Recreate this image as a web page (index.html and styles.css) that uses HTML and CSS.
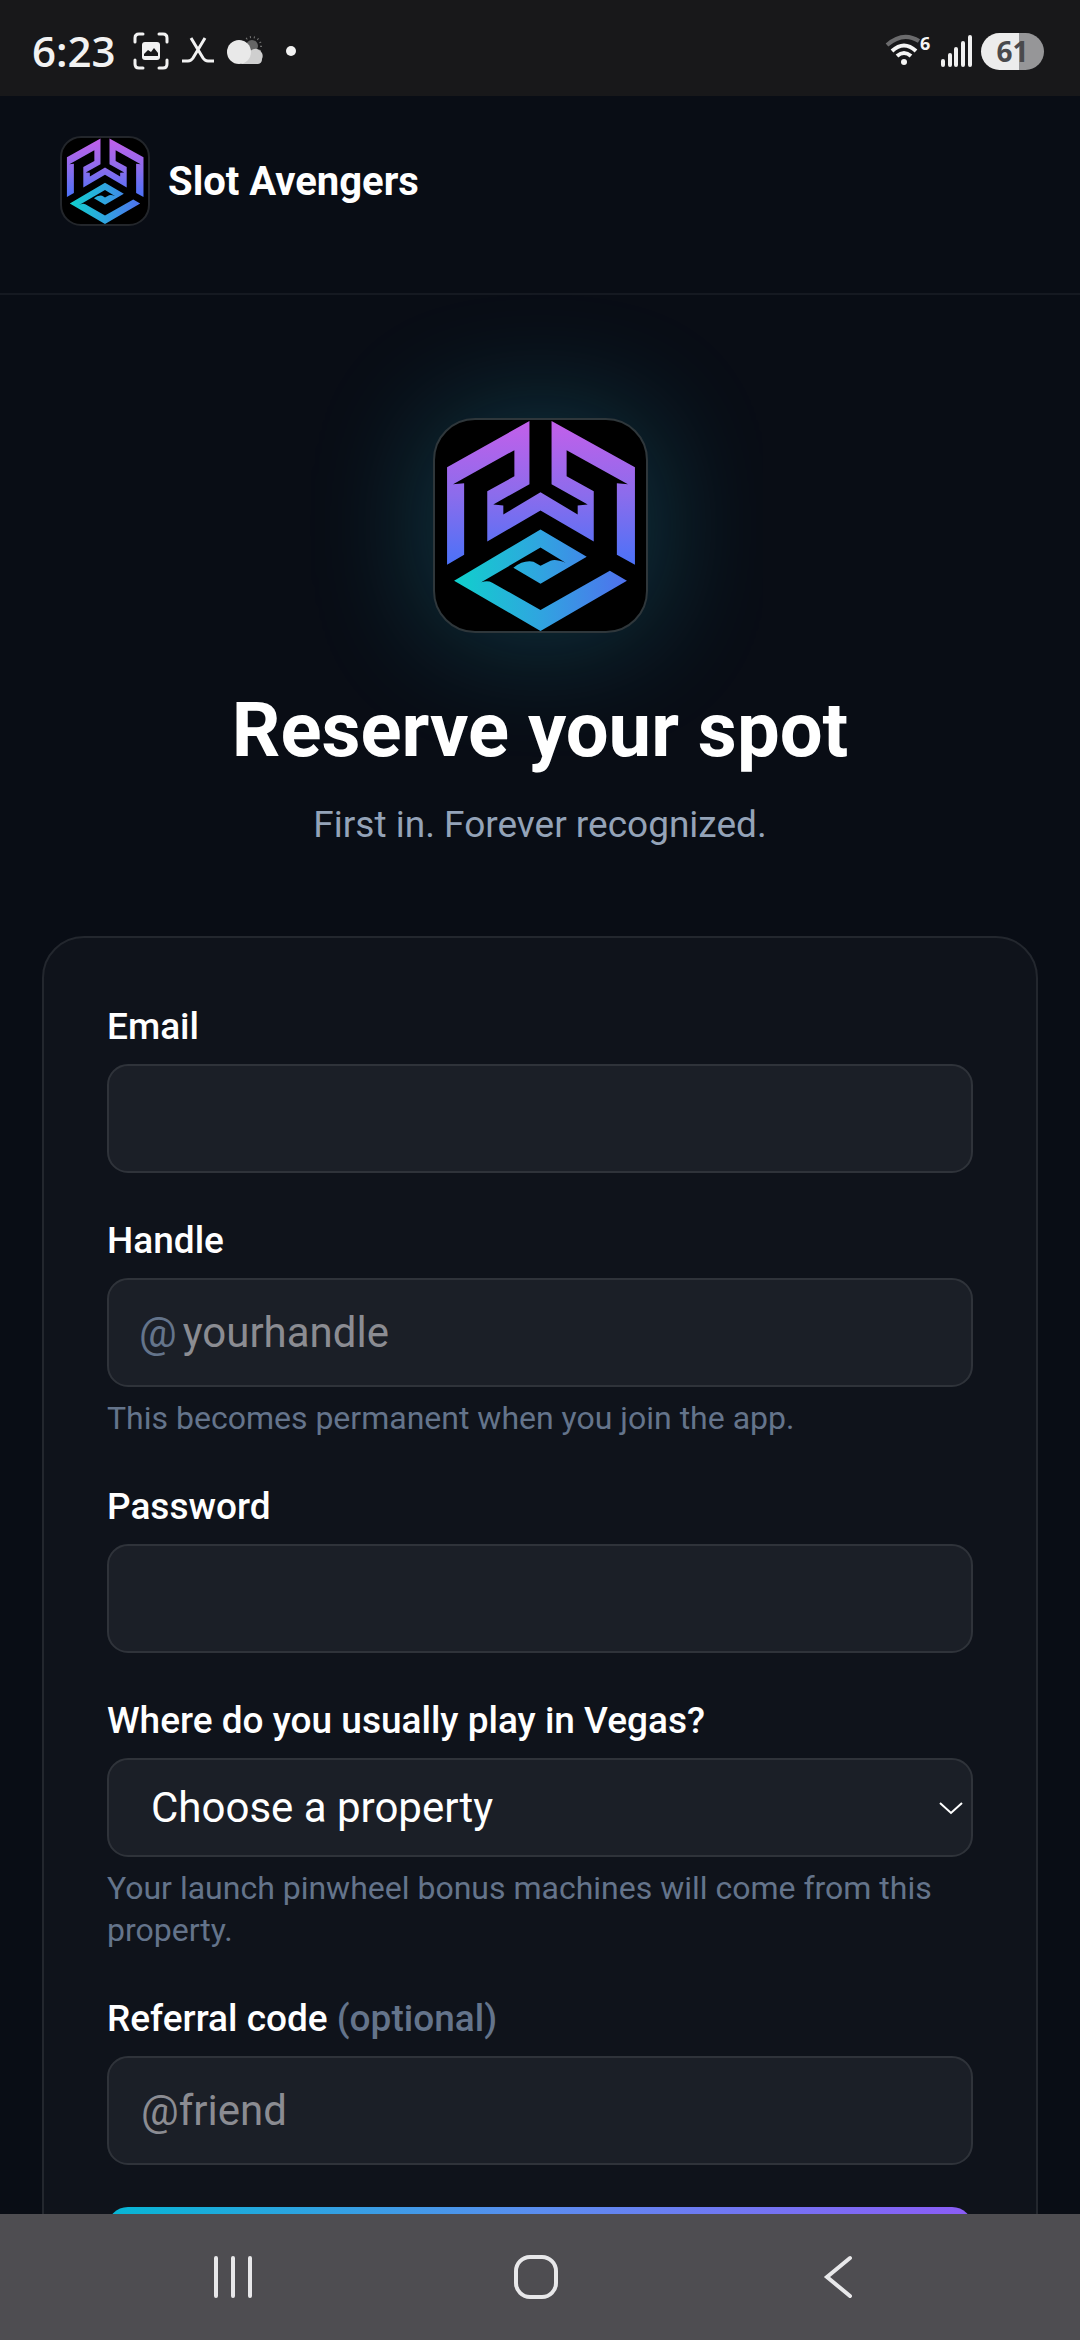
FILE: index.html
```html
<!DOCTYPE html>
<html lang="en">
<head>
    <meta charset="UTF-8">
    <meta name="viewport" content="width=device-width, initial-scale=1.0">
    <title>Slot Avengers</title>
    <link rel="stylesheet" href="styles.css">
</head>
<body>

    <!-- shared logo -->
    <svg class="defs" width="0" height="0" aria-hidden="true">
        <defs>
            <linearGradient id="purple" gradientUnits="userSpaceOnUse" x1="0" y1="5" x2="0" y2="145">
                <stop offset="0" stop-color="#c060ea"/>
                <stop offset="0.5" stop-color="#8b6cec"/>
                <stop offset="1" stop-color="#4a72f8"/>
            </linearGradient>
            <linearGradient id="teal" gradientUnits="userSpaceOnUse" x1="20" y1="0" x2="192" y2="0">
                <stop offset="0" stop-color="#10d0cc"/>
                <stop offset="0.5" stop-color="#30a4e0"/>
                <stop offset="1" stop-color="#5070ee"/>
            </linearGradient>
            <symbol id="logo" viewBox="0 0 210 210">
                <path fill="url(#purple)" d="M94 1V64L58 84L68 85V94L105 72L142 94V85L152 84L116 64V1L199 47V144L181 134V63L192 64L131 30V56L158 71V121L105 90L52 121V71L79 56V30L18 64L29 63V134L12 144V47Z"/>
                <path fill="url(#teal)" d="M19 160L105 109L151 136L105 163L78 147Q88 139 98 141L105 145L115 140Q120 138 130 142L105 127L40 165Q50 158 57 162L105 189L174 150L191 160L105 210Z"/>
            </symbol>
        </defs>
    </svg>

    <div class="status-bar">
        <div class="status-left">
            <span class="clock">6:23</span>
            <svg width="36" height="38" viewBox="0 0 36 38" fill="none" stroke="#f2f2f2" stroke-width="3" stroke-linecap="round">
                <path d="M2 10V6Q2 2 6 2H10M26 2H30Q34 2 34 6V10M34 28V32Q34 36 30 36H26M10 36H6Q2 36 2 32V28"/>
                <rect x="9" y="10" width="18" height="18" rx="3" fill="#f2f2f2" stroke="none"/>
                <path d="M11 24V22L15 18L18 20L21 16L25 21V24Z" fill="#18181a" stroke="none"/>
            </svg>
            <svg width="34" height="28" viewBox="0 0 34 28" fill="none" stroke="#f2f2f2" stroke-width="3">
                <path d="M10 1L22 21Q24 24 27 24H33M24 1L12 21Q10 24 7 24H1"/>
            </svg>
            <svg width="36" height="30" viewBox="0 0 36 30">
                <circle cx="25" cy="10" r="9" stroke="#777" stroke-width="2" stroke-dasharray="1 3" fill="none"/>
                <circle cx="25" cy="10" r="6" fill="#666"/>
                <path d="M14 28L22 17a7 7 0 0 1 13 6a5 5 0 0 1-4 5Z" fill="#cfcfcf"/>
                <circle cx="12" cy="16" r="12" fill="#e9e9e9"/>
            </svg>
            <span class="dot"></span>
        </div>
        <div class="status-right">
            <svg width="48" height="36" viewBox="0 0 48 36" fill="none" stroke="#f5f5f5" stroke-width="4">
                <path d="M2 12Q18 -2 34 8" stroke="#6b6b6d"/>
                <path d="M7 18Q19 7 31 18"/>
                <path d="M12 23Q19 17 26 23"/>
                <circle cx="19" cy="29" r="3" fill="#f5f5f5" stroke="none"/>
                <text class="wifi-gen" x="35" y="17">6</text>
            </svg>
            <svg width="32" height="34" viewBox="0 0 32 34" stroke="#f0f0f0" stroke-width="4" stroke-linecap="round">
                <path d="M2 27V31M9 21V31M15 15V31M22 9V31M29 3V31"/>
            </svg>
            <span class="battery">61</span>
        </div>
    </div>

    <main class="page">
        <header class="site-header">
            <svg class="brand-logo"><use href="#logo"/></svg>
            <span class="brand-name">Slot Avengers</span>
        </header>

        <section class="hero">
            <svg class="hero-logo"><use href="#logo"/></svg>
            <h1>Reserve your spot</h1>
            <p>First in. Forever recognized.</p>
        </section>

        <form class="card">
            <div class="field">
                <label for="email">Email</label>
                <input type="email" id="email">
            </div>
            <div class="field">
                <label for="handle">Handle</label>
                <div class="handle-box">
                    <span class="at">@</span>
                    <input type="text" id="handle" placeholder="yourhandle">
                </div>
                <p class="hint">This becomes permanent when you join the app.</p>
            </div>
            <div class="field">
                <label for="password">Password</label>
                <input type="password" id="password">
            </div>
            <div class="field">
                <label for="property">Where do you usually play in Vegas?</label>
                <div class="select-box">
                    <select id="property">
                        <option>Choose a property</option>
                    </select>
                    <svg class="chevron" width="24" height="14" viewBox="0 0 24 14" fill="none" stroke="#fff" stroke-width="2"><path d="M1 2L12 12L23 2"/></svg>
                </div>
                <p class="hint">Your launch pinwheel bonus machines will come from this property.</p>
            </div>
            <div class="field">
                <label for="referral">Referral code <span class="optional">(optional)</span></label>
                <input type="text" id="referral" placeholder="@friend">
            </div>
            <button type="submit" class="submit" aria-label="Reserve"></button>
        </form>
    </main>

    <nav class="nav-bar">
        <button aria-label="Recent apps">
            <svg width="44" height="44" viewBox="0 0 44 44" stroke="#e8e8ea" stroke-width="4" stroke-linecap="round"><path d="M5 3V41M22 3V41M39 3V41"/></svg>
        </button>
        <button aria-label="Home">
            <svg width="44" height="44" viewBox="0 0 44 44" fill="none" stroke="#e8e8ea" stroke-width="4"><rect x="2" y="2" width="40" height="40" rx="14"/></svg>
        </button>
        <button aria-label="Back">
            <svg width="44" height="44" viewBox="0 0 44 44" fill="none" stroke="#e8e8ea" stroke-width="4" stroke-linecap="round"><path d="M33 3L10 22L33 41"/></svg>
        </button>
    </nav>

</body>
</html>
```
FILE: styles.css
```css
* {
    box-sizing: border-box;
}

body {
    margin: 0;
    height: 100vh;
    display: flex;
    flex-direction: column;
    background: #090d15;
    color: #fff;
    font-family: Roboto, 'Noto Sans', sans-serif;
}

h1, p {
    margin: 0;
}

.defs {
    position: absolute;
}

/* status bar */

.status-bar {
    flex: none;
    height: 96px;
    padding: 6px 36px 0 32px;
    display: flex;
    justify-content: space-between;
    align-items: center;
    background: #18181a;
}

.status-left, .status-right {
    display: flex;
    align-items: center;
}

.status-left {
    gap: 12px;
}

.status-right {
    gap: 8px;
}

.clock {
    font: 600 42px/42px 'Open Sans', sans-serif;
    color: #f2f2f2;
    margin-right: 5px;
}

.dot {
    width: 10px;
    height: 10px;
    margin-left: 11px;
    border-radius: 50%;
    background: #f2f2f2;
}

.wifi-gen {
    font: 700 18px 'Open Sans', sans-serif;
    fill: #f5f5f5;
    stroke: none;
}

.battery {
    width: 63px;
    height: 37px;
    border-radius: 19px;
    background: linear-gradient(90deg, #ececec 61%, #969698 61%);
    color: #4a4a4c;
    font: 700 28px/37px 'Open Sans', sans-serif;
    text-align: center;
}

/* page */

.page {
    flex: 1;
    min-height: 0;
    overflow-y: auto;
    scrollbar-width: none;
}

.site-header {
    display: flex;
    align-items: center;
    gap: 18px;
    padding: 40px 60px 67px;
    border-bottom: 2px solid #151921;
}

.brand-logo {
    width: 90px;
    height: 90px;
    background: #000;
    border: 2px solid #23262b;
    border-radius: 21px;
}

.brand-name {
    font-size: 40px;
    font-weight: 700;
}

.hero {
    display: flex;
    flex-direction: column;
    align-items: center;
    padding: 123px 42px 84px;
    text-align: center;
}

.hero-logo {
    width: 215px;
    height: 215px;
    background: #000;
    border: 2px solid #2f373b;
    border-radius: 42px;
    box-shadow: 0 0 126px rgba(34, 211, 238, 0.24);
}

.hero h1 {
    margin-top: 53px;
    font-size: 76px;
    line-height: 88px;
    font-weight: 700;
}

.hero p {
    margin-top: 23px;
    font-size: 37px;
    line-height: 55px;
    color: #94a3b8;
}

/* form */

.card {
    margin: 0 42px 84px;
    padding: 63px;
    display: flex;
    flex-direction: column;
    gap: 42px;
    background: #0f131b;
    border: 2px solid #23272e;
    border-radius: 42px;
}

.field {
    display: flex;
    flex-direction: column;
}

.field label {
    margin-bottom: 11px;
    font-size: 37px;
    line-height: 52px;
    font-weight: 500;
}

.field input, .field select, .handle-box {
    width: 100%;
    height: 109px;
    padding: 0 32px;
    background: #1b1f27;
    border: 2px solid #2f333a;
    border-radius: 21px;
    color: #fff;
    font: 42px Roboto, 'Noto Sans', sans-serif;
}

.field input::placeholder {
    color: #8b8c92;
    opacity: 1;
}

.handle-box {
    display: flex;
    align-items: center;
    gap: 6px;
    padding: 0 30px;
}

.handle-box input {
    flex: 1;
    min-width: 0;
    height: 100%;
    padding: 0;
    border: none;
    background: none;
}

.at, .optional {
    color: #64748b;
}

.select-box {
    position: relative;
    display: flex;
}

.field select {
    height: 99px;
    padding: 0 42px;
    appearance: none;
}

/* sits over the select */
.chevron {
    position: absolute;
    right: 10px;
    top: 43px;
    pointer-events: none;
}

.hint {
    margin-top: 10px;
    font-size: 32px;
    line-height: 42px;
    color: #64748b;
}

.submit {
    height: 116px;
    border: none;
    border-radius: 21px;
    background: linear-gradient(90deg, #06b6d4, #5b8def 50%, #8b5cf6);
}

/* navigation bar */

.nav-bar {
    flex: none;
    height: 126px;
    padding: 0 90px 0 82px;
    display: flex;
    justify-content: space-around;
    align-items: center;
    background: #4e4d51;
}

.nav-bar button {
    display: flex;
    padding: 0;
    border: none;
    background: none;
}
```
